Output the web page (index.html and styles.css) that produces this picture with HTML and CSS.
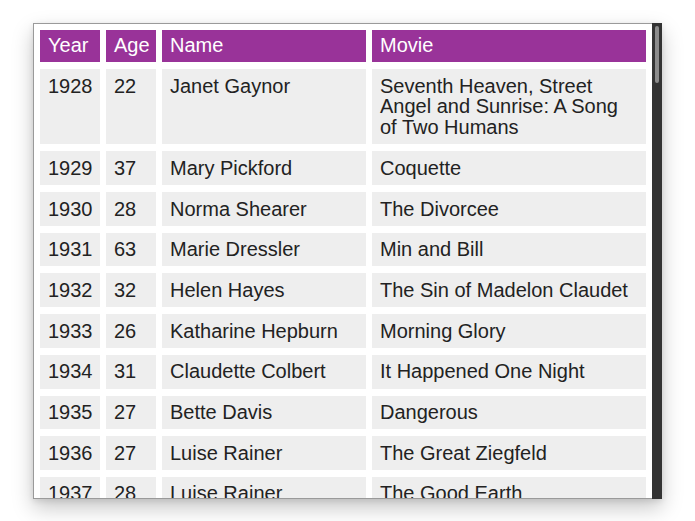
FILE: index.html
```html
<!DOCTYPE html>
<html>
<head>
<meta charset="utf-8">
<link rel="stylesheet" href="styles.css">
</head>
<body>
<div class="frame">
<div class="viewport">
<table class="oscars">
<thead>
<tr><th class="c-year">Year</th><th class="c-age">Age</th><th class="c-name">Name</th><th class="c-movie">Movie</th></tr>
</thead>
<tbody>
<tr><td>1928</td><td>22</td><td>Janet Gaynor</td><td>Seventh Heaven, Street Angel and Sunrise: A Song of Two Humans</td></tr>
<tr><td>1929</td><td>37</td><td>Mary Pickford</td><td>Coquette</td></tr>
<tr><td>1930</td><td>28</td><td>Norma Shearer</td><td>The Divorcee</td></tr>
<tr><td>1931</td><td>63</td><td>Marie Dressler</td><td>Min and Bill</td></tr>
<tr><td>1932</td><td>32</td><td>Helen Hayes</td><td>The Sin of Madelon Claudet</td></tr>
<tr><td>1933</td><td>26</td><td>Katharine Hepburn</td><td>Morning Glory</td></tr>
<tr><td>1934</td><td>31</td><td>Claudette Colbert</td><td>It Happened One Night</td></tr>
<tr><td>1935</td><td>27</td><td>Bette Davis</td><td>Dangerous</td></tr>
<tr><td>1936</td><td>27</td><td>Luise Rainer</td><td>The Great Ziegfeld</td></tr>
<tr><td>1937</td><td>28</td><td>Luise Rainer</td><td>The Good Earth</td></tr>
<tr><td>1938</td><td>30</td><td>Bette Davis</td><td>Jezebel</td></tr>
<tr><td>1939</td><td>26</td><td>Vivien Leigh</td><td>Gone with the Wind</td></tr>
<tr><td>1940</td><td>29</td><td>Ginger Rogers</td><td>Kitty Foyle</td></tr>
<tr><td>1941</td><td>24</td><td>Joan Fontaine</td><td>Suspicion</td></tr>
<tr><td>1942</td><td>38</td><td>Greer Garson</td><td>Mrs. Miniver</td></tr>
<tr><td>1943</td><td>25</td><td>Jennifer Jones</td><td>The Song of Bernadette</td></tr>
<tr><td>1944</td><td>29</td><td>Ingrid Bergman</td><td>Gaslight</td></tr>
<tr><td>1945</td><td>40</td><td>Joan Crawford</td><td>Mildred Pierce</td></tr>
<tr><td>1946</td><td>30</td><td>Olivia de Havilland</td><td>To Each His Own</td></tr>
<tr><td>1947</td><td>34</td><td>Loretta Young</td><td>The Farmer's Daughter</td></tr>
<tr><td>1948</td><td>34</td><td>Jane Wyman</td><td>Johnny Belinda</td></tr>
<tr><td>1949</td><td>33</td><td>Olivia de Havilland</td><td>The Heiress</td></tr>
<tr><td>1950</td><td>29</td><td>Judy Holliday</td><td>Born Yesterday</td></tr>
</tbody>
</table>
</div>
<div class="scrollbar"><div class="thumb"></div></div>
</div>
</body>
</html>
```

FILE: styles.css
```css
html, body {
  margin: 0;
  padding: 0;
  background: #ffffff;
}

body {
  height: 100vh;
  display: flex;
  align-items: center;
  justify-content: center;
  font-family: "Liberation Sans", Arial, sans-serif;
}

.frame {
  box-sizing: border-box;
  width: 629px;
  height: 476px;
  display: flex;
  border: 1px solid #9a9a9a;
  border-right: none;
  background: #ffffff;
  box-shadow: 0 9px 20px rgba(0, 0, 0, 0.22), 0 2px 6px rgba(0, 0, 0, 0.10);
}

.viewport {
  flex: 1;
  min-width: 0;
  overflow: hidden;
}

.scrollbar {
  width: 10px;
  flex: none;
  margin: -1px 0;
  padding-top: 3px;
  box-sizing: border-box;
  background: #333333;
}

.thumb {
  width: 4px;
  height: 57px;
  margin: 0 auto;
  border-radius: 2px;
  background: #8c8c8c;
}

.oscars {
  width: 100%;
  table-layout: fixed;
  border-collapse: separate;
  border-spacing: 6.6px 7px;
  margin-top: -1px;
  font-size: 20px;
  line-height: 20.7px;
  color: #222222;
}

.oscars th,
.oscars td {
  box-sizing: border-box;
  text-align: left;
  vertical-align: top;
  padding: 6.5px 8px;
}

.oscars th {
  background: #993399;
  color: #ffffff;
  font-weight: normal;
  padding: 5.5px 8px 6.5px;
}

.oscars td {
  background: #eeeeee;
}

.c-year { width: 60px; }
.c-age { width: 50px; }
.c-name { width: 204px; }
```
